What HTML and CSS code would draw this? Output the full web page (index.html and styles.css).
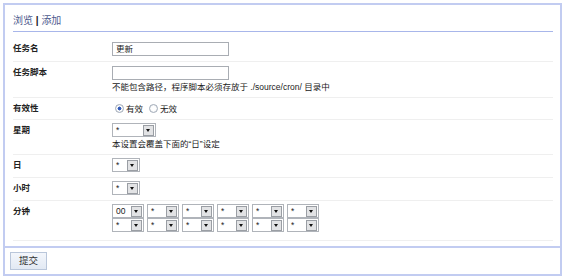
FILE: index.html
```html
<!DOCTYPE html>
<html lang="zh-CN">
<head>
  <meta charset="UTF-8">
  <title>计划任务</title>
  <link rel="stylesheet" href="styles.css">
</head>
<body>

  <div class="panel">
    <div class="tabs">
      <a href="#">浏览</a> <span class="sep">|</span> <a href="#">添加</a>
    </div>

    <div class="rows">
      <div class="row">
        <div class="label">任务名</div>
        <div class="field"><span class="text-input">更新</span></div>
      </div>
      <div class="row">
        <div class="label">任务脚本</div>
        <div class="field">
          <span class="text-input"></span>
          <div class="hint">不能包含路径，程序脚本必须存放于 ./source/cron/ 目录中</div>
        </div>
      </div>
      <div class="row">
        <div class="label">有效性</div>
        <div class="field radios">
          <span class="radio checked"></span><span class="radio-text">有效</span>
          <span class="radio"></span><span class="radio-text">无效</span>
        </div>
      </div>
      <div class="row">
        <div class="label">星期</div>
        <div class="field">
          <span class="sel wide"><span class="val">*</span><span class="arrow"></span></span>
          <div class="hint">本设置会覆盖下面的“日”设定</div>
        </div>
      </div>
      <div class="row">
        <div class="label">日</div>
        <div class="field">
          <span class="sel narrow"><span class="val">*</span><span class="arrow"></span></span>
        </div>
      </div>
      <div class="row">
        <div class="label">小时</div>
        <div class="field">
          <span class="sel narrow"><span class="val">*</span><span class="arrow"></span></span>
        </div>
      </div>
      <div class="row">
        <div class="label">分钟</div>
        <div class="field minutes">
          <span class="sel"><span class="val">00</span><span class="arrow"></span></span>
          <span class="sel"><span class="val">*</span><span class="arrow"></span></span>
          <span class="sel"><span class="val">*</span><span class="arrow"></span></span>
          <span class="sel"><span class="val">*</span><span class="arrow"></span></span>
          <span class="sel"><span class="val">*</span><span class="arrow"></span></span>
          <span class="sel"><span class="val">*</span><span class="arrow"></span></span>
          <span class="sel"><span class="val">*</span><span class="arrow"></span></span>
          <span class="sel"><span class="val">*</span><span class="arrow"></span></span>
          <span class="sel"><span class="val">*</span><span class="arrow"></span></span>
          <span class="sel"><span class="val">*</span><span class="arrow"></span></span>
          <span class="sel"><span class="val">*</span><span class="arrow"></span></span>
          <span class="sel"><span class="val">*</span><span class="arrow"></span></span>
        </div>
      </div>
    </div>

    <div class="footer">
      <span class="btn">提交</span>
    </div>
  </div>

</body>
</html>
```

FILE: styles.css
```css
body {
  margin: 3px;
  background-color: white;
  color: #222;
  font-family: "Liberation Sans", "Noto Sans CJK SC", sans-serif;
  font-size: 8.5px;
  line-height: 12px;
}
.panel {
  border: 2px solid #c2ccf1;
}
.tabs {
  margin: 0 7px 0 8px;
  padding: 9px 0 4px;
  border-bottom: 1px solid #a8b6ea;
  font-size: 10px;
  line-height: 13px;
  color: #4d5a8e;
}
.tabs a {
  color: #4d5a8e;
  text-decoration: none;
}
.tabs .sep {
  color: #222;
  font-weight: bold;
}
.rows {
  margin: 6px 7px 5px 8px;
}
.row {
  display: grid;
  grid-template-columns: 99px 1fr;
  padding: 3px 0 5px;
  border-bottom: 1px solid #efefef;
}
.label {
  font-weight: bold;
  padding-top: 2px;
  line-height: 11px;
}
.field {
  display: flex;
  flex-direction: column;
  align-items: flex-start;
}
.text-input {
  display: block;
  box-sizing: border-box;
  width: 117px;
  height: 14px;
  margin-top: 1px;
  border: 1px solid #a9adb3;
  padding-left: 3px;
  line-height: 12px;
}
.hint {
  color: #222;
  line-height: 12px;
  padding-top: 1px;
  margin-bottom: -1px;
}
.radios {
  flex-direction: row;
  align-items: center;
  height: 13px;
  padding-top: 1px;
  margin-bottom: -1px;
}
.radio {
  display: inline-block;
  box-sizing: border-box;
  width: 9px;
  height: 9px;
  border-radius: 50%;
  border: 1px solid #a2abb8;
  background: radial-gradient(circle, #fff 40%, #e3e6ea 100%);
}
.radio:first-child { margin-left: 3px; }
.radio.checked {
  background: radial-gradient(circle, #2b55b5 0, #3d64c0 35%, #fff 45%, #e3e6ea 100%);
}
.radio-text {
  margin: 0 6px 0 2px;
}
.sel {
  display: flex;
  box-sizing: border-box;
  width: 32px;
  height: 14px;
  border: 1px solid #b0b4ba;
  padding: 0 1px 0 3px;
  align-items: center;
  justify-content: space-between;
  line-height: 10px;
}
.sel.wide { width: 44px; }
.sel.narrow { width: 28px; }
.sel .val {
  align-self: flex-start;
  padding-top: 1px;
}
.arrow {
  position: relative;
  box-sizing: border-box;
  width: 11px;
  height: 11px;
  border: 1px solid #9a9ea4;
  background-color: #e2e3e5;
}
.arrow::after {
  content: "";
  position: absolute;
  left: 2px;
  top: 3px;
  border-left: 2.5px solid transparent;
  border-right: 2.5px solid transparent;
  border-top: 3px solid #111;
}
.minutes {
  display: grid;
  grid-template-columns: repeat(6, 32px);
  column-gap: 3px;
  padding-bottom: 3px;
}
.footer {
  border-top: 2px solid #c2ccf1;
  padding: 4px 5px 4px;
}
.btn {
  display: block;
  box-sizing: border-box;
  width: 37px;
  height: 18px;
  border: 1px solid #b9c6da;
  background: linear-gradient(#f3f6fb, #e2e9f3);
  text-align: center;
  font-size: 9.5px;
  line-height: 16px;
  color: #333;
}
```
